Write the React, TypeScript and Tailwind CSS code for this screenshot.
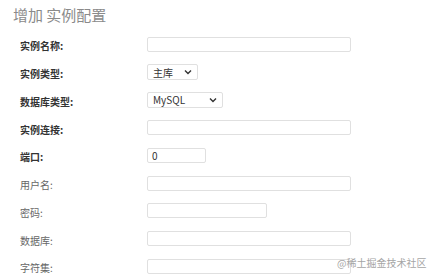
import React from 'react';

type Row = {
  label: string;
  bold?: boolean;
  kind: 'input' | 'select';
  width: number;
  value?: string;
};

const rows: Row[] = [
  { label: '实例名称:', bold: true, kind: 'input', width: 204 },
  { label: '实例类型:', bold: true, kind: 'select', width: 51, value: '主库' },
  { label: '数据库类型:', bold: true, kind: 'select', width: 76, value: 'MySQL' },
  { label: '实例连接:', bold: true, kind: 'input', width: 204 },
  { label: '端口:', bold: true, kind: 'input', width: 59, value: '0' },
  { label: '用户名:', kind: 'input', width: 204 },
  { label: '密码:', kind: 'input', width: 120 },
  { label: '数据库:', kind: 'input', width: 204 },
  { label: '字符集:', kind: 'input', width: 204 },
];

function Chevron() {
  return (
    <svg width="8" height="6" viewBox="0 0 8 6" className="shrink-0">
      <path d="M1 1.5 L4 4.5 L7 1.5" fill="none" stroke="#333" strokeWidth="1.4" />
    </svg>
  );
}

function Field({ row }: { row: Row }) {
  if (row.kind === 'select') {
    return (
      <div
        style={{ width: row.width }}
        className="flex h-[16px] items-center justify-between rounded-[2px] border border-[#e0e0e0] bg-white pl-[5px] pr-[5px] text-[10px] text-[#333]"
      >
        <span>{row.value}</span>
        <Chevron />
      </div>
    );
  }
  return (
    <div
      style={{ width: row.width }}
      className="flex h-[15px] items-center rounded-[2px] border border-[#e0e0e0] bg-white pl-[4px] text-[10px] text-[#333]"
    >
      {row.value}
    </div>
  );
}

export default function App() {
  return (
    <div className="relative h-[277px] w-[429px] overflow-hidden bg-white font-['Noto_Sans_CJK_SC','Liberation_Sans',sans-serif]">
      <h1 className="pl-[13px] pt-[6px] text-[15px] leading-[18px] font-normal text-[#8a8a8a]">
        增加 实例配置
      </h1>
      <div className="mt-[6.5px]">
        {rows.map((r) => (
          <div key={r.label} className="flex h-[27.75px] items-center">
            <span
              className={`w-[147px] pl-[20px] pt-[3px] text-[10px] ${
                r.bold ? 'font-bold text-[#333]' : 'text-[#666]'
              }`}
            >
              {r.label}
            </span>
            <Field row={r} />
          </div>
        ))}
      </div>
      <span className="absolute left-[337px] top-[255px] text-[10px] text-[#a5a5a5]">
        @稀土掘金技术社区
      </span>
    </div>
  );
}
